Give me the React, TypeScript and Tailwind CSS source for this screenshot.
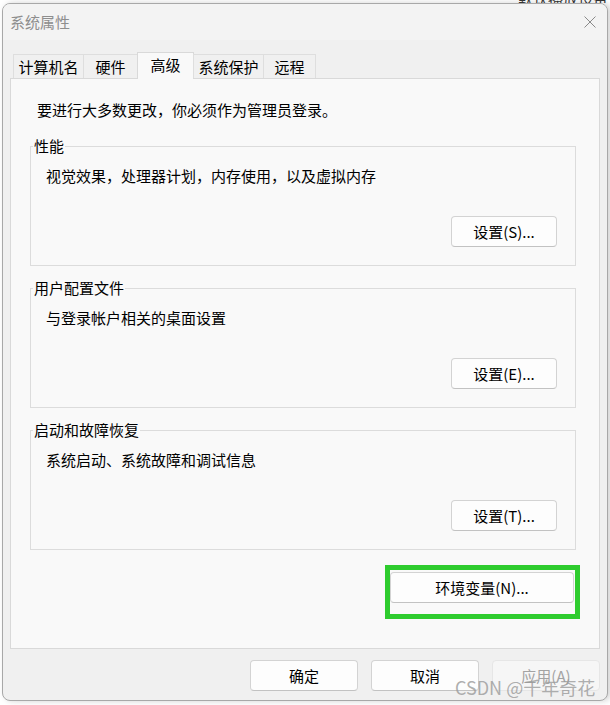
import React from "react";

const Btn = ({
  label,
  disabled = false,
  w = "w-[106px]",
}: {
  label: string;
  disabled?: boolean;
  w?: string;
}) => (
  <button
    type="button"
    disabled={disabled}
    className={`${w} h-[31px] rounded-[4px] border text-[15px] leading-[20px] ${
      disabled
        ? "border-[#e6e6e6] bg-[#f6f6f6] text-[#a3a3a3]"
        : "border-[#d3d3d3] border-b-[#c2c2c2] bg-[#fdfdfd] text-black"
    }`}
  >
    {label}
  </button>
);

const Group = ({
  title,
  desc,
  btn,
}: {
  title: string;
  desc: string;
  btn: string;
}) => (
  <fieldset className="ml-[19px] mr-[23px] border border-[#dcdcdc] pb-[18px]">
    <legend className="ml-[2px] px-px leading-[20px]">{title}</legend>
    <p className="mt-[10px] pl-[15px] leading-[20px]">{desc}</p>
    <div className="mt-[30px] flex justify-end pr-[18px]">
      <Btn label={btn} />
    </div>
  </fieldset>
);

const tabs = [
  { name: "计算机名", w: "w-[71px]" },
  { name: "硬件", w: "w-[55px]" },
  { name: "高级", w: "w-[57px]", active: true },
  { name: "系统保护", w: "w-[71px]" },
  { name: "远程", w: "w-[53px]" },
];

export default function App() {
  return (
    <div className="relative h-[705px] w-[610px] overflow-hidden bg-white font-['Noto_Sans_CJK_SC','Noto_Sans',sans-serif] text-[15px] text-black">
      {/* what peeks out behind the window */}
      <div className="flex h-[3px] justify-end overflow-hidden pr-[2px] text-[15px] leading-[10px] text-[#333]">
        <span className="-mt-[6px]">默认播放设备</span>
      </div>

      <div className="ml-[2px] h-[698px] w-[606px] overflow-hidden rounded-[8px] border border-[#a8a8a8] bg-[#f0f0f0] shadow-[3px_0_6px_rgba(0,0,0,0.18)]">
        {/* title bar */}
        <div className="flex h-[36px] items-center justify-between bg-[#f3f3f3] pl-[7px] pr-[11px]">
          <span className="leading-[20px] text-[#8e8e8e]">系统属性</span>
          <svg width="12" height="12" viewBox="0 0 12 12">
            <path d="M0.5 0.5L11.5 11.5M11.5 0.5L0.5 11.5" stroke="#8a8a8a" strokeWidth="1" />
          </svg>
        </div>

        <div className="px-[7px] pt-[12px]">
          {/* tabs */}
          <div className="relative z-10 flex items-end pl-[3px]">
            {tabs.map((t) => (
              <div
                key={t.name}
                className={`${t.w} -mr-px text-center leading-[20px] ${
                  t.active
                    ? "-mb-px h-[27px] border border-b-0 border-[#d9d9d9] bg-[#f9f9f9] pt-[2px]"
                    : "h-[24px] border border-b-0 border-[#dedede] bg-[#f0f0f0] pt-[2px]"
                }`}
              >
                {t.name}
              </div>
            ))}
          </div>

          {/* panel */}
          <div className="h-[571px] w-[590px] border border-[#d9d9d9] bg-[#f9f9f9] pt-[21px]">
            <p className="pl-[26px] leading-[20px]">要进行大多数更改，你必须作为管理员登录。</p>
            <div className="mt-[16px] flex flex-col gap-[12px]">
              <Group
                title="性能"
                desc="视觉效果，处理器计划，内存使用，以及虚拟内存"
                btn="设置(S)..."
              />
              <Group title="用户配置文件" desc="与登录帐户相关的桌面设置" btn="设置(E)..." />
              <Group
                title="启动和故障恢复"
                desc="系统启动、系统故障和调试信息"
                btn="设置(T)..."
              />
            </div>
            <div className="mt-[22px] flex justify-end pr-[25px]">
              <div className="relative">
                <Btn label="环境变量(N)..." w="w-[184px]" />
                <div className="pointer-events-none absolute -left-[5px] -top-[7px] h-[54px] w-[195px] border-[5px] border-[#2ecc2e]" />
              </div>
            </div>
          </div>

          {/* dialog buttons */}
          <div className="mt-[11px] flex gap-[13px] pl-[240px]">
            <Btn label="确定" w="w-[109px]" />
            <Btn label="取消" w="w-[109px]" />
            <Btn label="应用(A)" w="w-[109px]" disabled />
          </div>
        </div>
      </div>

      {/* watermark */}
      <div className="pointer-events-none absolute left-[455px] top-[675px] text-[18px] leading-[24px] text-[#9a9a9a]/80">
        CSDN @千年奇花
      </div>
    </div>
  );
}
